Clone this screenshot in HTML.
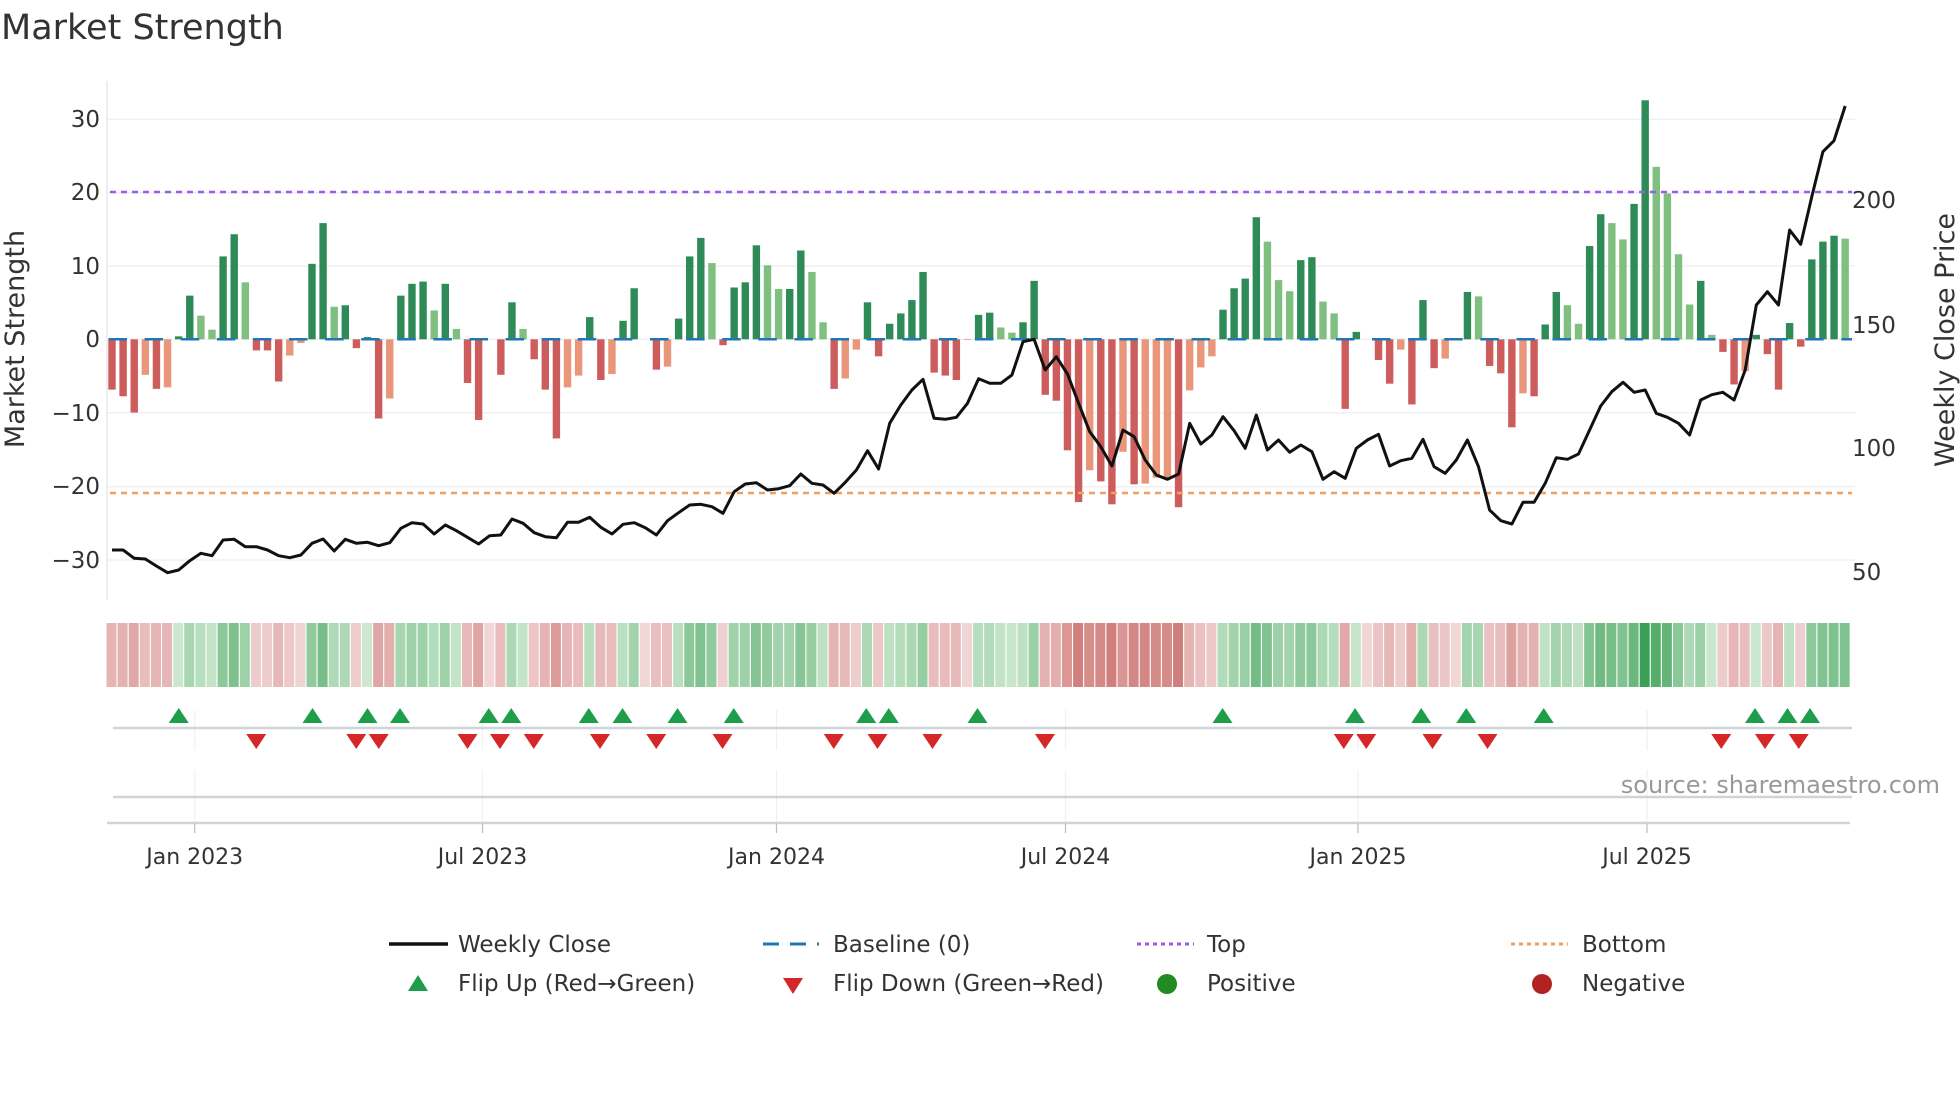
<!DOCTYPE html>
<html><head><meta charset="utf-8"><style>
html,body{margin:0;padding:0;background:#fff;}
svg{display:block;font-family:"DejaVu Sans","Liberation Sans",sans-serif;}
</style></head><body>
<svg id="s" width="1960" height="1102" viewBox="0 0 1960 1102" xmlns="http://www.w3.org/2000/svg">
<rect width="1960" height="1102" fill="#fff"/>
<text x="1" y="39" font-size="35" fill="#333">Market Strength</text>
<g id="grid"></g>
<line x1="107" y1="81" x2="107" y2="600" stroke="#e6e8ec" stroke-width="1.5"/>
<g id="bars"></g>
<line x1="110" y1="192" x2="1852" y2="192" stroke="#9b5de5" stroke-width="2.5" stroke-dasharray="6,5"/>
<line x1="110" y1="493" x2="1852" y2="493" stroke="#f0a060" stroke-width="2.5" stroke-dasharray="6,5"/>
<line x1="108.5" y1="339.3" x2="1852" y2="339.3" stroke="#1f77b4" stroke-width="2.5" stroke-dasharray="18.5,17.6"/>
<polyline id="close" fill="none" stroke="#111" stroke-width="3" stroke-linejoin="round"/>
<g font-size="23" fill="#333" text-anchor="end">
<text x="100" y="127">30</text><text x="100" y="200">20</text><text x="100" y="274">10</text>
<text x="100" y="347">0</text><text x="100" y="421">−10</text><text x="100" y="494">−20</text><text x="100" y="568">−30</text>
</g>
<g font-size="23" fill="#333">
<text x="1852" y="208">200</text><text x="1852" y="333">150</text><text x="1852" y="456">100</text><text x="1852" y="580">50</text>
</g>
<text transform="translate(24,339) rotate(-90)" font-size="27" fill="#333" text-anchor="middle">Market Strength</text>
<text transform="translate(1954,340) rotate(-90)" font-size="27" fill="#333" text-anchor="middle">Weekly Close Price</text>
<g id="heat"></g>
<g id="vgrid"></g>
<line x1="113" y1="728" x2="1852" y2="728" stroke="#cfd4d8" stroke-width="2.5"/>
<line x1="113" y1="797" x2="1852" y2="797" stroke="#cfd4d8" stroke-width="2.5"/>
<line x1="107" y1="823" x2="1850" y2="823" stroke="#cfd4d8" stroke-width="2.5"/>
<g id="marks"></g>
<text x="1940" y="793" font-size="24" fill="#999" text-anchor="end">source: sharemaestro.com</text>
<g id="xt" font-size="22" fill="#333" text-anchor="middle"></g>
<g font-size="23" fill="#333">
<line x1="389" y1="944" x2="448" y2="944" stroke="#111" stroke-width="3.5"/>
<text x="458" y="952">Weekly Close</text>
<line x1="763" y1="944" x2="819" y2="944" stroke="#1f77b4" stroke-width="3" stroke-dasharray="16,11"/>
<text x="833" y="952">Baseline (0)</text>
<line x1="1137" y1="944" x2="1194" y2="944" stroke="#9b5de5" stroke-width="3" stroke-dasharray="4,4"/>
<text x="1207" y="952">Top</text>
<line x1="1511" y1="944" x2="1568" y2="944" stroke="#f0a060" stroke-width="3" stroke-dasharray="4,4"/>
<text x="1582" y="952">Bottom</text>
<polygon points="408,991 428,991 418,975" fill="#1e9e4a"/>
<text x="458" y="991">Flip Up (Red→Green)</text>
<polygon points="783,978 803,978 793,994" fill="#d62728"/>
<text x="833" y="991">Flip Down (Green→Red)</text>
<circle cx="1167" cy="984" r="10" fill="#228b22"/>
<text x="1207" y="991">Positive</text>
<circle cx="1542" cy="984" r="10" fill="#b22222"/>
<text x="1582" y="991">Negative</text>
</g>
</svg>
<script>
var NS="http://www.w3.org/2000/svg";
function el(t,a,p){var e=document.createElementNS(NS,t);for(var k in a)e.setAttribute(k,a[k]);document.getElementById(p).appendChild(e);return e;}
var B=[[-6.8,'d'],[-7.7,'d'],[-9.9,'d'],[-4.8,'l'],[-6.7,'d'],[-6.5,'l'],[0.4,'d'],[5.9,'d'],[3.2,'l'],[1.3,'l'],[11.2,'d'],[14.2,'d'],[7.7,'l'],[-1.5,'d'],[-1.5,'d'],[-5.7,'d'],[-2.2,'l'],[-0.5,'l'],[10.2,'d'],[15.7,'d'],[4.4,'l'],[4.6,'d'],[-1.2,'d'],[0.3,'d'],[-10.7,'d'],[-8.0,'l'],[5.9,'d'],[7.5,'d'],[7.8,'d'],[3.9,'l'],[7.5,'d'],[1.4,'l'],[-5.9,'d'],[-10.9,'d'],[0,'d'],[-4.8,'d'],[5.0,'d'],[1.4,'l'],[-2.7,'d'],[-6.8,'d'],[-13.4,'d'],[-6.5,'l'],[-4.9,'l'],[3.0,'d'],[-5.5,'d'],[-4.7,'l'],[2.5,'d'],[6.9,'d'],[0,'d'],[-4.1,'d'],[-3.7,'l'],[2.8,'d'],[11.2,'d'],[13.7,'d'],[10.3,'l'],[-0.8,'d'],[7.0,'d'],[7.7,'d'],[12.7,'d'],[10.0,'l'],[6.8,'l'],[6.8,'d'],[12.0,'d'],[9.1,'l'],[2.3,'l'],[-6.7,'d'],[-5.3,'l'],[-1.4,'l'],[5.0,'d'],[-2.3,'d'],[2.1,'d'],[3.5,'d'],[5.3,'d'],[9.1,'d'],[-4.5,'d'],[-4.9,'d'],[-5.5,'d'],[-0.1,'l'],[3.3,'d'],[3.6,'d'],[1.6,'l'],[0.9,'l'],[2.3,'d'],[7.9,'d'],[-7.5,'d'],[-8.3,'d'],[-15.0,'d'],[-22.0,'d'],[-17.7,'l'],[-19.2,'d'],[-22.3,'d'],[-15.2,'l'],[-19.6,'d'],[-19.5,'l'],[-18.7,'l'],[-18.7,'l'],[-22.7,'d'],[-6.9,'l'],[-3.8,'l'],[-2.3,'l'],[4.0,'d'],[6.9,'d'],[8.2,'d'],[16.5,'d'],[13.2,'l'],[8.0,'l'],[6.5,'l'],[10.7,'d'],[11.1,'d'],[5.1,'l'],[3.5,'l'],[-9.4,'d'],[1.0,'d'],[0,'d'],[-2.8,'d'],[-6.0,'d'],[-1.4,'l'],[-8.8,'d'],[5.3,'d'],[-3.9,'d'],[-2.6,'l'],[0,'d'],[6.4,'d'],[5.8,'l'],[-3.6,'d'],[-4.6,'d'],[-11.9,'d'],[-7.3,'l'],[-7.7,'d'],[2.0,'d'],[6.4,'d'],[4.6,'l'],[2.1,'l'],[12.6,'d'],[16.9,'d'],[15.7,'l'],[13.5,'l'],[18.3,'d'],[32.3,'d'],[23.3,'l'],[19.7,'l'],[11.5,'l'],[4.7,'l'],[7.9,'d'],[0.6,'l'],[-1.7,'d'],[-6.1,'d'],[-4.3,'l'],[0.6,'d'],[-2.0,'d'],[-6.8,'d'],[2.2,'d'],[-1.0,'d'],[10.8,'d'],[13.2,'d'],[14.0,'d'],[13.6,'l']];
var L=[1380,1380,1405,1407,1428,1448,1440,1412,1390,1397,1350,1348,1370,1370,1380,1397,1403,1395,1360,1347,1383,1348,1360,1357,1367,1358,1315,1298,1302,1332,1305,1322,1342,1362,1337,1335,1287,1300,1328,1340,1343,1297,1297,1282,1312,1332,1303,1298,1313,1335,1292,1268,1245,1243,1250,1270,1205,1182,1178,1200,1196,1187,1152,1180,1185,1210,1177,1140,1082,1137,1000,945,900,868,985,988,982,940,866,880,880,855,755,748,840,800,852,940,1025,1070,1128,1020,1040,1110,1155,1168,1152,1000,1062,1035,980,1022,1075,975,1080,1050,1087,1065,1085,1168,1145,1165,1075,1050,1033,1128,1112,1105,1048,1130,1150,1110,1050,1130,1260,1292,1302,1237,1237,1180,1103,1108,1092,1020,948,905,877,907,900,970,982,1000,1035,930,914,907,930,840,645,605,645,420,463,320,185,152,48];
var Z=339.3,U=7.4,X0=112,DX=11.11;
[119.3,192.8,266,339.3,412.7,486.7,560].forEach(function(y){el('line',{x1:108,y1:y,x2:1855,y2:y,stroke:'#eef0f4','stroke-width':1.5},'grid');});
function mix(a,b,t){var r=[];for(var i=0;i<3;i++)r.push(Math.round(a[i]+(b[i]-a[i])*t));return 'rgb('+r.join(',')+')';}
var pts=[];
B.forEach(function(b,i){
 var x=X0+i*DX,v=b[0];
 if(v!==0){
  var col=v>0?(b[1]=='d'?'#2e8b57':'#7fbf7f'):(b[1]=='d'?'#cd5c5c':'#e9967a');
  var h=Math.abs(v)*U;
  el('rect',{x:x-3.7,y:v>0?Z-h:Z,width:7.4,height:h,fill:col},'bars');
 }
 var c;
 if(v>0){var t=Math.min(1,v/30);c=mix([208,234,210],[58,160,85],Math.pow(t,0.8));}
 else {var t=Math.min(1,-v/23);c=mix([241,214,214],[208,125,122],Math.pow(t,0.8));}
 el('rect',{x:x-5.5,y:623,width:10,height:64,fill:c},'heat');
 pts.push(x.toFixed(1)+','+(90+L[i]/3).toFixed(1));
});
document.getElementById('close').setAttribute('points',pts.join(' '));
var ticks=[[194.7,'Jan 2023'],[482.5,'Jul 2023'],[776.5,'Jan 2024'],[1065.5,'Jul 2024'],[1358,'Jan 2025'],[1647,'Jul 2025']];
ticks.forEach(function(t){
 el('line',{x1:t[0],y1:710,x2:t[0],y2:750,stroke:'#eef0f2','stroke-width':1.2},'vgrid');
 el('line',{x1:t[0],y1:770,x2:t[0],y2:823,stroke:'#eef0f2','stroke-width':1.2},'vgrid');
 el('line',{x1:t[0],y1:823,x2:t[0],y2:833,stroke:'#bbb','stroke-width':1.2},'vgrid');
 var e=el('text',{x:t[0],y:864},'xt');e.textContent=t[1];
});
[143,250,294,320,391,409,471,498,542,587,693,711,782,978,1084,1137,1173,1235,1404,1430,1448].forEach(function(z){var x=z/0.8;
 el('polygon',{points:(x-10)+',723 '+(x+10)+',723 '+x+',708',fill:'#1e9e4a'},'marks');});
[205,285,303,374,400,427,480,525,578,667,702,746,836,1075,1093,1146,1190,1377,1412,1439].forEach(function(z){var x=z/0.8;
 el('polygon',{points:(x-10)+',734 '+(x+10)+',734 '+x+',749',fill:'#d62728'},'marks');});
</script>
</body></html>
